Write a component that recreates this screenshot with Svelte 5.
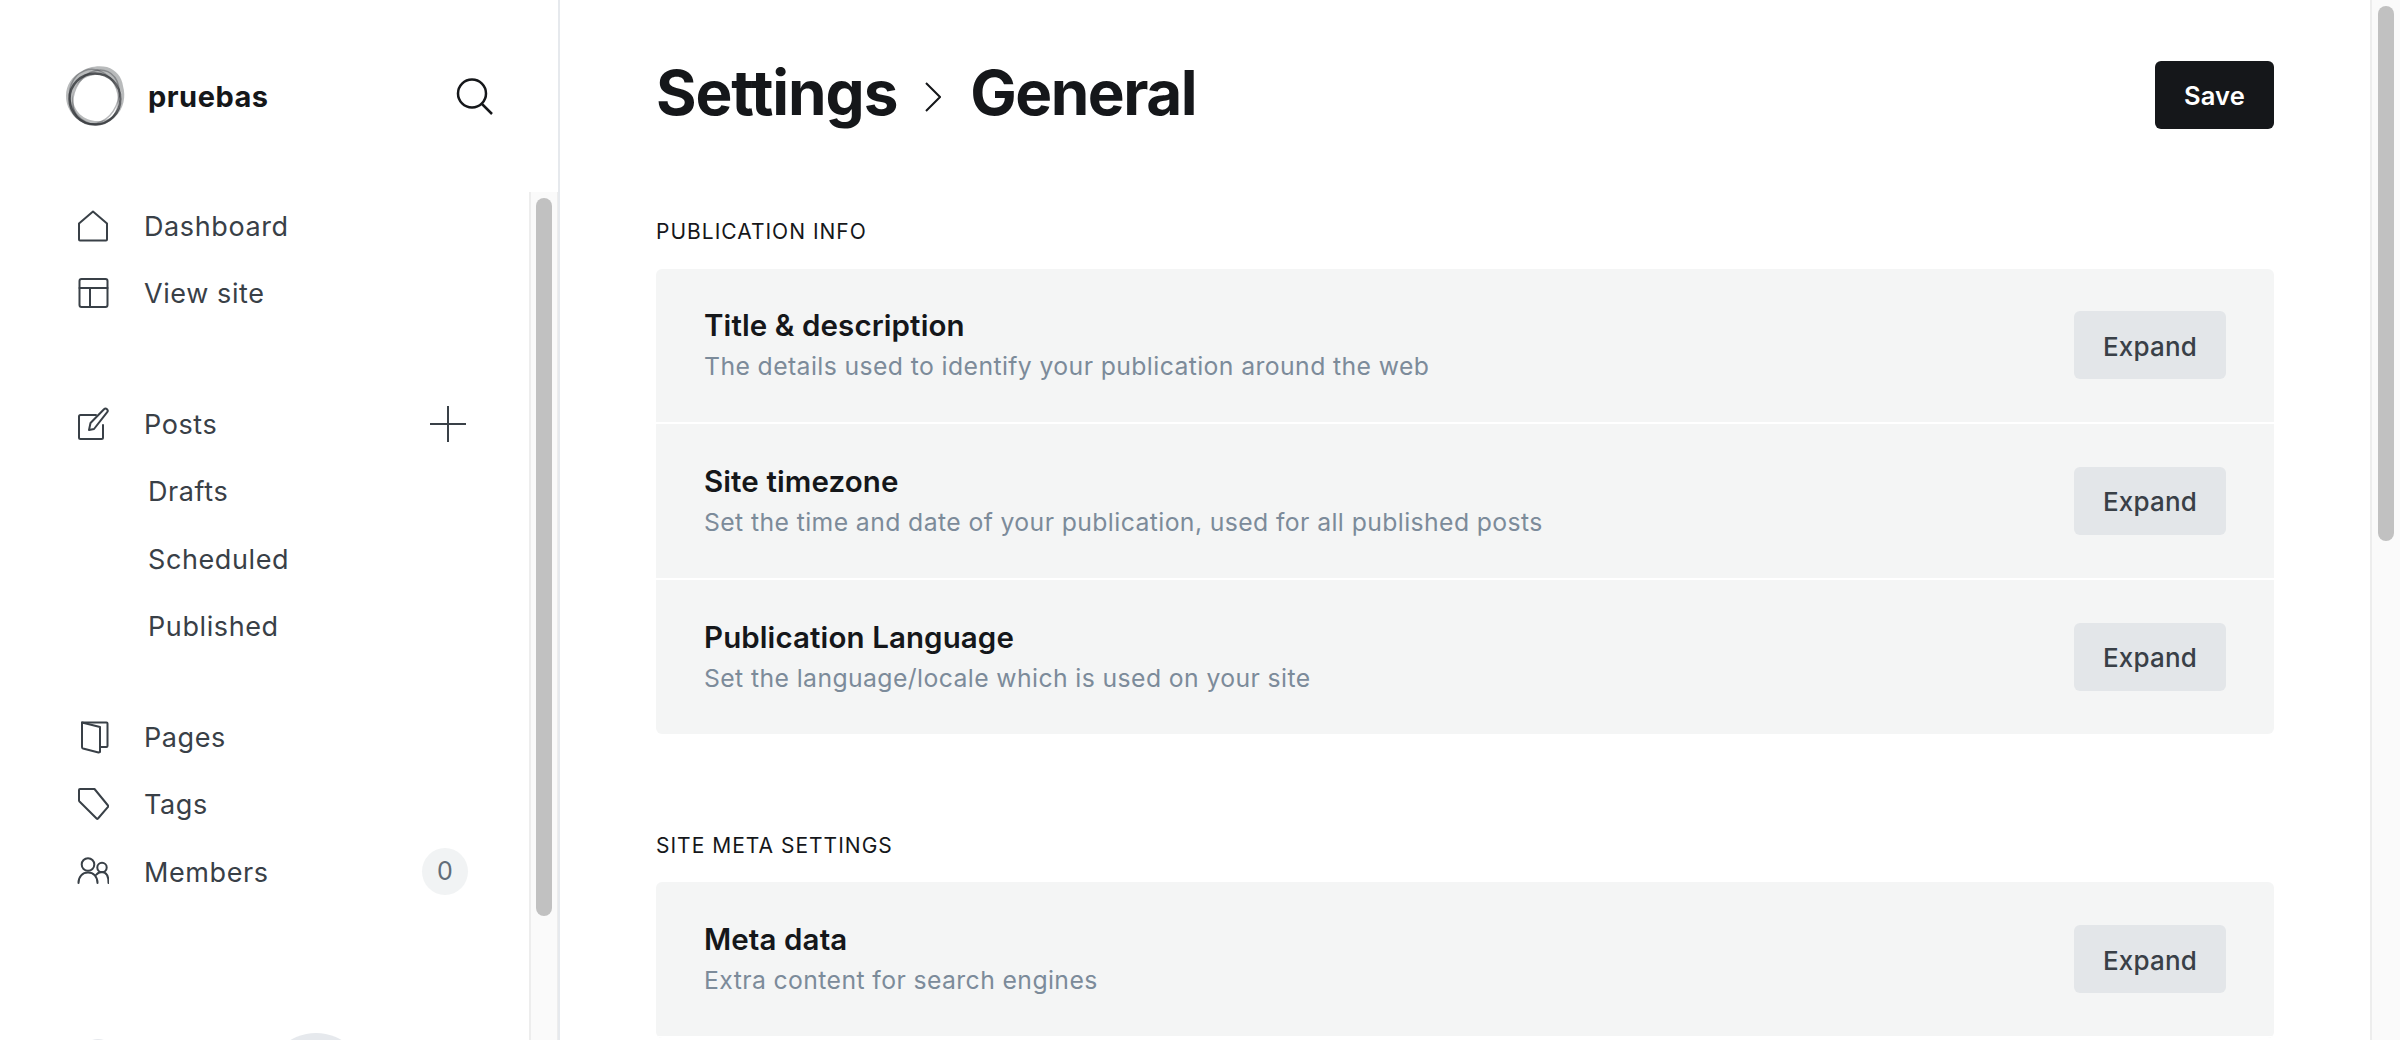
<script lang="ts">
  // Ghost-style settings screen, drawn at 1.5x the usual sizes.
  const topLinks = [
    { label: "Dashboard", icon: "home" },
    { label: "View site", icon: "layout" },
  ];
  const subLinks = ["Drafts", "Scheduled", "Published"];
  const lowerLinks = [
    { label: "Pages", icon: "pages" },
    { label: "Tags", icon: "tag" },
    { label: "Members", icon: "members", count: 0 },
  ];

  const sections = [
    {
      title: "Publication info",
      rows: [
        { name: "Title & description", text: "The details used to identify your publication around the web" },
        { name: "Site timezone", text: "Set the time and date of your publication, used for all published posts" },
        { name: "Publication Language", text: "Set the language/locale which is used on your site" },
      ],
    },
    {
      title: "Site meta settings",
      more: true, // list carries on below the fold
      rows: [{ name: "Meta data", text: "Extra content for search engines" }],
    },
  ];
</script>

{#snippet navIcon(name: string)}
  <svg class="ico" viewBox="0 0 32 34" width="32" height="34" aria-hidden="true">
    {#if name === "home"}
      <path d="M2 14.500 16 2.500 30 14.500v16a1 1 0 0 1-1 1H3a1 1 0 0 1-1-1z" />
    {:else if name === "layout"}
      <rect x="2.500" y="3" width="28" height="28" rx="2" />
      <path d="M2.500 12h28M13 12v19" />
    {:else if name === "post"}
      <path d="M19 8H3.500A1.500 1.500 0 0 0 2 9.500v21A1.500 1.500 0 0 0 3.500 32h21a1.500 1.500 0 0 0 1.500-1.500V18" />
      <path d="M12 23l1.500-7L27 2.200a2.200 2.200 0 0 1 3 0 2.300 2.300 0 0 1 0 3.200L17 22z" />
    {:else if name === "pages"}
      <path d="M5 2.500 23 7v25l-1.500.5L6 28.500a1.500 1.500 0 0 1-1-1.500z" />
      <path d="M5 2.500h24.500a1 1 0 0 1 1 1V26a1 1 0 0 1-1 1H23" />
    {:else if name === "tag"}
      <path d="M3 2h14.500L31 18.500a1 1 0 0 1 0 1.400L21 31.500a1 1 0 0 1-1.400 0L2.500 14.500a2 2 0 0 1-.5-1.500V3a1 1 0 0 1 1-1z" />
    {:else}
      <circle cx="11" cy="9.500" r="6.300" />
      <path d="M1.500 28c0-6.500 4-10.500 9.500-10.500S20.500 21.500 20.500 28" />
      <circle cx="25" cy="12.500" r="4.700" />
      <path d="M19 20c1.500-2 3.500-3 6-3 4.500 0 6.500 4.500 6.500 11" />
    {/if}
  </svg>
{/snippet}

<div class="app">
  <aside class="side">
    <header class="brand">
      <svg class="logo" viewBox="0 0 60 60" width="60" height="60" aria-hidden="true">
        <path
          class="band"
          fill-rule="evenodd"
          d="M1 30C1 19 7 10 16 6 22 1 33-1 42 1 51 4 57 11 58 20 61 30 59 43 50 51 43 58 34 60 26 59 14 58 1 46 1 30zM32.500 9C19 9 8 19 8 32c0 13 11 23 24.500 23S57 45 57 32 46 9 32.500 9z"
        />
        <circle class="line" cx="30" cy="33" r="25.500" />
        <ellipse class="line soft" cx="31" cy="31" rx="22" ry="28" transform="rotate(25 31 31)" />
        <ellipse class="line soft" cx="29" cy="31" rx="24" ry="28" transform="rotate(-20 29 31)" />
      </svg>
      <span class="brand-name">pruebas</span>
      <svg class="search" viewBox="0 0 36 36" width="36" height="36" aria-hidden="true">
        <circle cx="16" cy="15.500" r="14" />
        <path d="M26 26l10 10" />
      </svg>
    </header>

    <div class="side-scroll">
      <nav class="nav">
        <ul>
          {#each topLinks as l}
            <li class="link">{@render navIcon(l.icon)}<span class="label">{l.label}</span></li>
          {/each}
        </ul>
        <ul class="posts">
          <li class="link">
            {@render navIcon("post")}<span class="label">Posts</span>
            <svg class="plus" viewBox="0 0 36 36" width="36" height="36" aria-hidden="true">
              <path d="M18 0v36M0 18h36" />
            </svg>
          </li>
          {#each subLinks as s}
            <li class="link sub"><span class="label">{s}</span></li>
          {/each}
        </ul>
        <ul class="lower">
          {#each lowerLinks as l}
            <li class="link">
              {@render navIcon(l.icon)}<span class="label">{l.label}</span>
              {#if l.count !== undefined}
                <span class="count">{l.count}</span>
              {/if}
            </li>
          {/each}
        </ul>
        <div class="foot">
          <span class="foot-small"></span>
          <span class="foot-avatar"></span>
        </div>
      </nav>
      <div class="track side-track"><div class="thumb"></div></div>
    </div>
  </aside>

  <main class="main">
    <div class="content">
      <header class="page-head">
        <h1>
          <span>Settings</span>
          <svg class="chev" viewBox="0 0 16 30" width="16" height="30" aria-hidden="true">
            <path d="M1 1l14 14L1 29" />
          </svg>
          <span class="crumb">General</span>
        </h1>
        <button class="save">Save</button>
      </header>

      {#each sections as sec}
        <section class="sec">
          <h2>{sec.title}</h2>
          <div class="card" class:more={sec.more}>
            {#each sec.rows as r}
              <div class="row">
                <div class="row-text">
                  <h3>{r.name}</h3>
                  <p>{r.text}</p>
                </div>
                <button class="expand">Expand</button>
              </div>
            {/each}
          </div>
        </section>
      {/each}
    </div>
  </main>

  <div class="track main-track"><div class="thumb"></div></div>
</div>

<style>
  :global(body) {
    margin: 0;
    background: #fff;
    overflow: hidden;
  }

  .app {
    display: flex;
    height: 1040px;
    overflow: hidden;
    font-family: Inter, "Noto Sans", sans-serif;
    color: #15171a;
  }

  .side {
    flex: 0 0 558px;
    display: flex;
    flex-direction: column;
    border-right: 2px solid #e6e9ed;
  }

  .brand {
    flex: 0 0 192px;
    box-sizing: border-box;
    display: flex;
    align-items: flex-start;
    padding: 66px 66px 0 65px;
  }

  .logo {
    flex: none;
    overflow: visible;
  }

  .logo .band {
    fill: #8b8d8f;
    fill-opacity: 0.6;
  }

  .logo .line {
    fill: none;
    stroke: #2c2f33;
    stroke-width: 2.500;
    stroke-opacity: 0.75;
  }

  .logo .soft {
    stroke-width: 1.500;
    stroke-opacity: 0.35;
  }

  .brand-name {
    margin-left: 23px;
    font-size: 29px;
    font-weight: 700;
    line-height: 62px;
    letter-spacing: 0.5px;
    flex: 1;
  }

  .search {
    margin-top: 12px;
    overflow: visible;
  }

  .search circle,
  .search path {
    fill: none;
    stroke: #15171a;
    stroke-width: 2.500;
  }

  .side-scroll {
    flex: 1;
    display: flex;
    min-height: 0;
  }

  .nav {
    flex: 1;
    min-width: 0;
  }

  ul {
    list-style: none;
    margin: 0;
    padding: 0;
  }

  .posts {
    margin-top: 63px;
  }

  .lower {
    margin-top: 43px;
  }

  .link {
    height: 67.500px;
    display: flex;
    align-items: center;
    padding: 0 62px 0 77px;
    font-size: 27px;
    font-weight: 400;
    letter-spacing: 0.6px;
    color: #394047;
  }

  .label {
    padding-top: 1px;
  }

  .ico {
    flex: none;
    margin-right: 35px;
    fill: none;
    stroke: #394047;
    stroke-width: 2;
    stroke-linejoin: round;
    stroke-linecap: round;
  }

  .sub {
    padding-left: 148px;
  }

  .plus {
    margin-left: auto;
    margin-right: 1px;
    stroke: #394047;
    stroke-width: 2;
  }

  .count {
    margin-left: auto;
    margin-right: -1px;
    width: 46px;
    height: 47px;
    border-radius: 50%;
    background: #f1f3f4;
    color: #626d79;
    font-size: 25px;
    text-align: center;
    line-height: 47px;
    letter-spacing: 0;
  }

  .foot {
    display: flex;
    align-items: flex-start;
    margin-top: 127.500px;
    padding-left: 80px;
  }

  .foot-small {
    flex: none;
    width: 36px;
    height: 36px;
    border-radius: 50%;
    background: #e6e9ed;
    margin-top: 6px;
  }

  .foot-avatar {
    flex: none;
    width: 100px;
    height: 100px;
    border-radius: 50%;
    background: #e6e9ed;
    margin-left: 150px;
  }

  .track {
    flex: none;
    box-sizing: border-box;
    background: #fafafa;
    border-left: 2px solid #ededed;
  }

  .thumb {
    width: 16px;
    background: #c1c1c1;
    border-radius: 8px;
  }

  .side-track {
    width: 29px;
    height: 848px;
    padding: 6px 0 0 5px;
    border-right: 1px solid #ededed;
  }

  .side-track .thumb {
    height: 718px;
  }

  .main-track {
    flex: 0 0 30px;
    padding: 6px 0 0 6px;
  }

  .main-track .thumb {
    height: 535px;
  }

  .main {
    flex: 1;
    min-width: 0;
    overflow: hidden;
  }

  .content {
    padding: 60px 96px 0 96px;
  }

  .page-head {
    display: flex;
    justify-content: space-between;
    align-items: flex-start;
    height: 156px;
  }

  h1 {
    display: flex;
    align-items: center;
    margin: 0;
    font-size: 62px;
    font-weight: 700;
    line-height: 66px;
    letter-spacing: -1.100px;
  }

  .crumb {
    letter-spacing: -1.500px;
  }

  .chev {
    margin: 8px 29px 0 28px;
    fill: none;
    stroke: #15171a;
    stroke-width: 2;
  }

  button {
    border: 0;
    border-radius: 6px;
    font-family: inherit;
    padding: 0;
  }

  .save {
    margin-top: 1px;
    width: 119px;
    height: 68px;
    background: #15171a;
    color: #fff;
    font-size: 25.500px;
    font-weight: 600;
    letter-spacing: 0.2px;
  }

  .sec {
    margin-bottom: 96px;
  }

  h2 {
    margin: 0 0 21.500px;
    font-size: 21px;
    font-weight: 400;
    line-height: 31px;
    text-transform: uppercase;
    letter-spacing: 1px;
  }

  .card {
    border-radius: 6px;
    overflow: hidden;
    background: #f4f5f5;
  }

  .row {
    box-sizing: border-box;
    height: 155.500px;
    display: flex;
    align-items: center;
    justify-content: space-between;
    padding: 0 48px;
    border-bottom: 2px solid #fff;
  }

  .row:last-child {
    height: 154px;
    border-bottom: 0;
  }

  .card.more .row:last-child {
    height: 156px;
    border-bottom: 2px solid #fff;
  }

  h3 {
    margin: -1px 0 0;
    font-size: 29.500px;
    font-weight: 600;
    line-height: 36px;
    letter-spacing: 0.1px;
  }

  p {
    margin: 7px 0 0;
    font-size: 24.750px;
    line-height: 32px;
    letter-spacing: 0.4px;
    color: #7c8b9a;
  }

  .expand {
    flex: none;
    width: 152px;
    height: 68px;
    padding-top: 2px;
    background: #e3e6e9;
    color: #394047;
    font-size: 26px;
    font-weight: 500;
    letter-spacing: 0.2px;
  }
</style>
